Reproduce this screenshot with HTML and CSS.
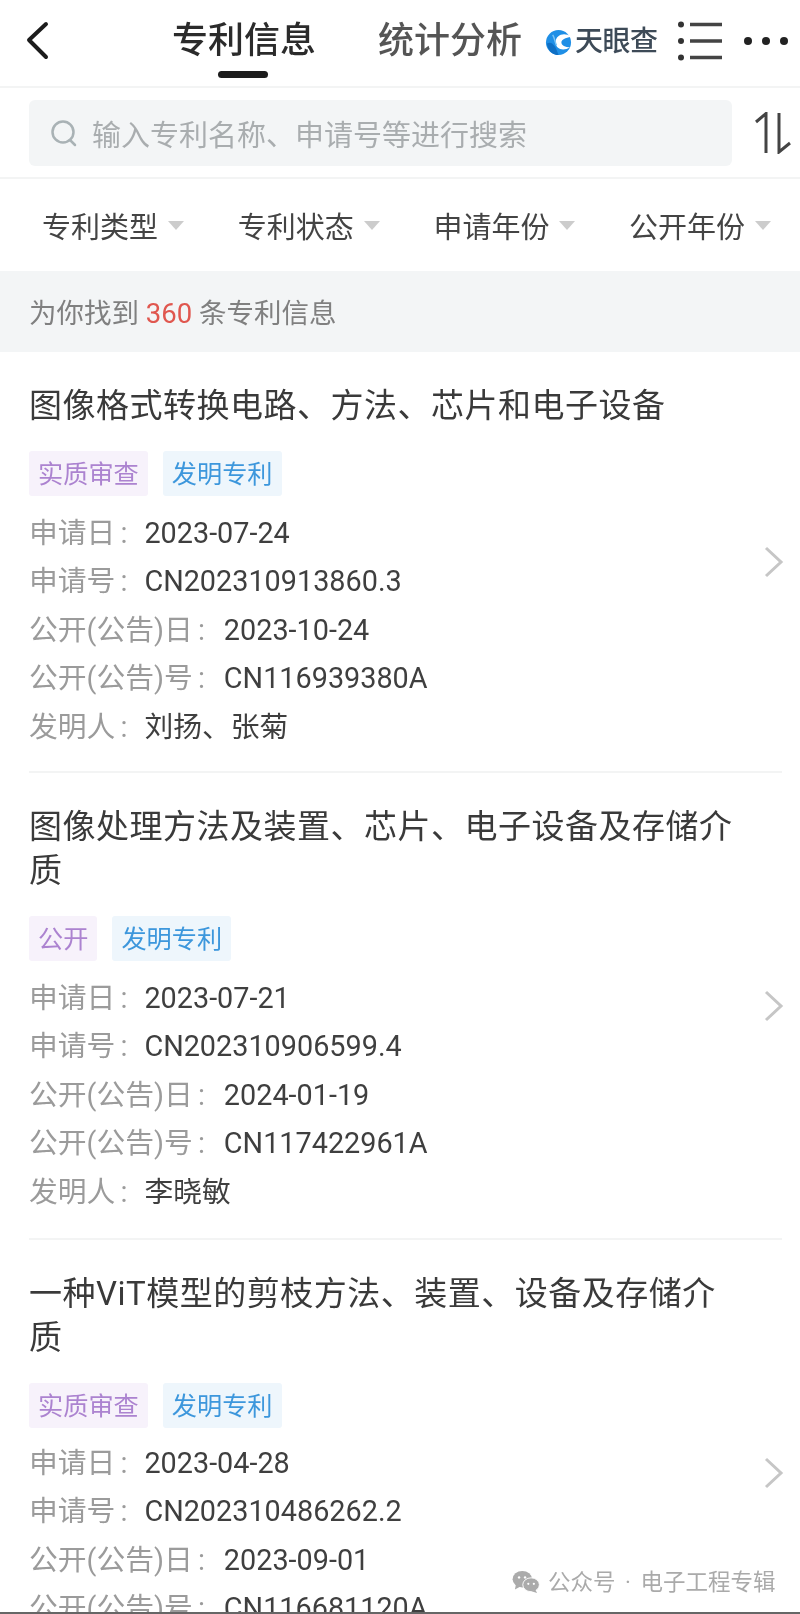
FILE: index.html
```html
<!DOCTYPE html>
<html lang="zh">
<head>
<meta charset="utf-8">
<title>专利信息</title>
<link rel="stylesheet" href="styles.css">
</head>
<body>
<div class="page">
  <header class="topbar">
    <svg class="back" width="28" height="40" viewBox="0 0 28 40"><path d="M22 4 L5 20 L22 37" fill="none" stroke="#1c1c1c" stroke-width="4" stroke-linecap="round" stroke-linejoin="round"/></svg>
    <div class="tab tab-on">专利信息</div>
    <div class="tab">统计分析</div>
    <div class="brand">
      <svg width="27" height="27" viewBox="0 0 28 28"><circle cx="14" cy="14" r="13" fill="#1f8fe6"/><path d="M27 8 C20 3 11 6 11 14 C11 20 18 24 26 19 C21 19 17 17 17 14 C17 11 21 9 27 8Z" fill="#fff"/><path d="M2 15 C7 12 11 17 14 27 C8 27 3 23 2 15Z" fill="#0f6fc4"/><path d="M8 6 C10 9 10 13 12 17" fill="none" stroke="#7cc4f5" stroke-width="1.500"/></svg>
      <span class="brand-name">天眼查</span>
    </div>
    <svg class="list-ico" width="46" height="42" viewBox="0 0 46 42"><circle cx="4" cy="4.500" r="3" fill="#333"/><circle cx="4" cy="21" r="3" fill="#333"/><circle cx="4" cy="37.500" r="3" fill="#333"/><path d="M13 4.500H45M13 21H45M13 37.500H45" stroke="#444" stroke-width="3.500"/></svg>
    <svg class="more-ico" width="46" height="12" viewBox="0 0 46 12"><circle cx="5" cy="6" r="4" fill="#222"/><circle cx="23" cy="6" r="4" fill="#222"/><circle cx="41" cy="6" r="4" fill="#222"/></svg>
  </header>

  <div class="searchbar">
    <div class="search">
      <svg width="28" height="28" viewBox="0 0 28 28"><circle cx="13" cy="13" r="10.500" fill="none" stroke="#a9b2b5" stroke-width="2.500"/><path d="M20 21 L25 26" stroke="#a9b2b5" stroke-width="2.500" stroke-linecap="round"/></svg>
      <span class="placeholder">输入专利名称、申请号等进行搜索</span>
    </div>
    <svg class="sort" width="36" height="42" viewBox="0 0 36 42"><path d="M1 10 L11 1.500 V41" fill="none" stroke="#444" stroke-width="3"/><path d="M24 1 V40 L35 31" fill="none" stroke="#444" stroke-width="3"/></svg>
  </div>

  <nav class="filters">
    <div class="filter">专利类型<i class="caret"></i></div>
    <div class="filter">专利状态<i class="caret"></i></div>
    <div class="filter">申请年份<i class="caret"></i></div>
    <div class="filter">公开年份<i class="caret"></i></div>
  </nav>

  <div class="count">为你找到 <em>360</em> 条专利信息</div>

  <section class="item">
    <h2 class="title">图像格式转换电路、方法、芯片和电子设备</h2>
    <div class="tags"><span class="tag tag-p">实质审查</span><span class="tag tag-b">发明专利</span></div>
    <dl class="rows">
      <div class="row"><dt>申请日<span class="colon">:</span></dt><dd>2023-07-24</dd></div>
      <div class="row"><dt>申请号<span class="colon">:</span></dt><dd>CN202310913860.3</dd></div>
      <div class="row row-wide"><dt>公开(公告)日<span class="colon">:</span></dt><dd>2023-10-24</dd></div>
      <div class="row row-wide"><dt>公开(公告)号<span class="colon">:</span></dt><dd>CN116939380A</dd></div>
      <div class="row"><dt>发明人<span class="colon">:</span></dt><dd>刘扬、张菊</dd></div>
    </dl>
    <svg class="chev" width="20" height="32" viewBox="0 0 20 32"><path d="M2 2 L17 16 L2 30" fill="none" stroke="#c6c6c6" stroke-width="3"/></svg>
  </section>

  <section class="item">
    <h2 class="title">图像处理方法及装置、芯片、电子设备及存储介质</h2>
    <div class="tags"><span class="tag tag-p">公开</span><span class="tag tag-b">发明专利</span></div>
    <dl class="rows">
      <div class="row"><dt>申请日<span class="colon">:</span></dt><dd>2023-07-21</dd></div>
      <div class="row"><dt>申请号<span class="colon">:</span></dt><dd>CN202310906599.4</dd></div>
      <div class="row row-wide"><dt>公开(公告)日<span class="colon">:</span></dt><dd>2024-01-19</dd></div>
      <div class="row row-wide"><dt>公开(公告)号<span class="colon">:</span></dt><dd>CN117422961A</dd></div>
      <div class="row"><dt>发明人<span class="colon">:</span></dt><dd>李晓敏</dd></div>
    </dl>
    <svg class="chev" width="20" height="32" viewBox="0 0 20 32"><path d="M2 2 L17 16 L2 30" fill="none" stroke="#c6c6c6" stroke-width="3"/></svg>
  </section>

  <section class="item">
    <h2 class="title">一种ViT模型的剪枝方法、装置、设备及存储介质</h2>
    <div class="tags"><span class="tag tag-p">实质审查</span><span class="tag tag-b">发明专利</span></div>
    <dl class="rows">
      <div class="row"><dt>申请日<span class="colon">:</span></dt><dd>2023-04-28</dd></div>
      <div class="row"><dt>申请号<span class="colon">:</span></dt><dd>CN202310486262.2</dd></div>
      <div class="row row-wide"><dt>公开(公告)日<span class="colon">:</span></dt><dd>2023-09-01</dd></div>
      <div class="row row-wide"><dt>公开(公告)号<span class="colon">:</span></dt><dd>CN116681120A</dd></div>
    </dl>
    <svg class="chev" width="20" height="32" viewBox="0 0 20 32"><path d="M2 2 L17 16 L2 30" fill="none" stroke="#c6c6c6" stroke-width="3"/></svg>
  </section>

  <div class="watermark">
    <svg width="30" height="24" viewBox="0 0 30 26"><ellipse cx="11" cy="10" rx="10.500" ry="9" fill="#ababab"/><path d="M4 16 L3 21 L9 18Z" fill="#ababab"/><ellipse cx="20.500" cy="16" rx="9" ry="7.500" fill="#ababab" stroke="#fff" stroke-width="1"/><path d="M25 21 L27 25 L21 23Z" fill="#ababab"/><circle cx="7.500" cy="8" r="1.300" fill="#fff"/><circle cx="14" cy="8" r="1.300" fill="#fff"/><circle cx="17.500" cy="15" r="1.200" fill="#fff"/><circle cx="23.500" cy="15" r="1.200" fill="#fff"/></svg>
    <span>公众号 · 电子工程专辑</span>
  </div>
  <div class="edge"></div>
</div>
</body>
</html>
```

FILE: styles.css
```css
* { box-sizing: border-box; }
html, body { margin: 0; padding: 0; background: #fff; }
body { font-family: Roboto, "Noto Sans CJK SC", "Noto Sans", sans-serif; }
.page { position: relative; width: 800px; height: 1614px; overflow: hidden; background: #fff; color: #3c3c3c; filter: blur(0.45px); }

.topbar { display: flex; align-items: center; height: 88px; border-bottom: 2px solid #f3f4f4; padding-left: 24px; position: relative; }
.back { flex: none; margin-right: 120px; margin-bottom: 7px; }
.tab { font-size: 36px; line-height: 44px; color: #555; margin-right: 62px; margin-bottom: 4px; white-space: nowrap; font-weight: 500; }
.tab-on { color: #2b2b2b; position: relative; }
.tab-on::after { content: ""; position: absolute; left: 46px; bottom: -15px; width: 50px; height: 7px; border-radius: 3.500px; background: #1c1c1c; }
.brand { display: flex; align-items: center; position: absolute; left: 545px; top: 27px; }
.brand-name { font-size: 28px; line-height: 30px; font-weight: 500; color: #3d4a57; letter-spacing: -0.500px; margin-left: 3px; }
.list-ico { position: absolute; left: 677px; top: 20px; }
.more-ico { position: absolute; left: 743px; top: 35px; }

.searchbar { display: flex; align-items: center; height: 91px; padding-left: 29px; border-bottom: 2px solid #f3f4f4; }
.search { display: flex; align-items: center; width: 703px; height: 66px; background: #f3f5f6; border-radius: 6px; padding-left: 21px; }
.placeholder { font-size: 29px; color: #a9adaf; margin-left: 14px; }
.sort { margin-left: 23px; }

.filters { display: flex; align-items: center; height: 92px; padding-left: 42px; }
.filter { flex: none; display: flex; align-items: center; width: 195.700px; font-size: 29px; color: #444; }
.caret { width: 0; height: 0; margin-left: 10px; border-left: 8.500px solid transparent; border-right: 8.500px solid transparent; border-top: 9px solid #cccccc; }

.count { height: 81px; background: #f3f5f6; padding: 3px 0 0 29px; line-height: 80px; font-size: 27.500px; color: #808080; }
.count em { font-style: normal; color: #e0574f; }

.item { position: relative; margin: 0 18px 0 29px; padding-top: 32px; border-bottom: 2px solid #f3f4f4; height: 467px; }
.item:nth-of-type(1) { height: 421px; }
.title { margin: 0; font-size: 33px; line-height: 44px; font-weight: 400; color: #3a3a3a; letter-spacing: 0.500px; padding-right: 44px; }
.tags { display: flex; gap: 15px; margin-top: 23px; }
.tag { height: 45px; line-height: 47px; padding: 0 9px; font-size: 25.200px; border-radius: 3px; }
.tag-p { background: #f7f2fb; color: #ac83d0; }
.tag-b { background: #eef6fc; color: #3d97dc; }
.rows { margin: 13px 0 0; }
.item:nth-of-type(3) .rows { margin-top: 11px; }
.row { display: flex; height: 48.400px; line-height: 48px; font-size: 28.800px; white-space: nowrap; }
.row dt { color: #9b9b9b; }
.row dd { margin: 0 0 0 17px; color: #3f3f3f; }
.row-wide dd { margin-left: 19px; }
.colon { margin-left: 5px; }
.chev { position: absolute; right: -2px; top: 50%; margin-top: -16px; }

.watermark { position: absolute; left: 511px; top: 1566px; display: flex; align-items: center; gap: 7px; font-size: 22.500px; line-height: 32px; color: #aaa; word-spacing: 4px; white-space: nowrap; }
.edge { position: absolute; left: 0; right: 0; bottom: 0; height: 2px; background: #666; }
```
